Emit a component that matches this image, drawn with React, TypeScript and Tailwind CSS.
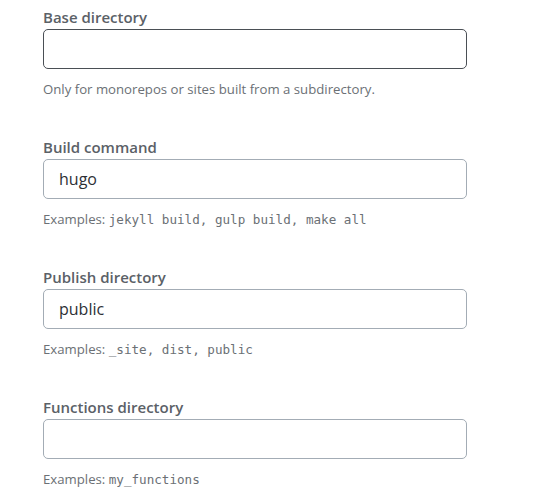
import React from 'react';

type Field = {
  label: string;
  value: string;
  focused?: boolean;
  help: React.ReactNode;
};

const mono = 'font-["DejaVu_Sans_Mono",monospace] text-[12.6px] leading-none';

const fields: Field[] = [
  {
    label: 'Base directory',
    value: '',
    focused: true,
    help: 'Only for monorepos or sites built from a subdirectory.',
  },
  {
    label: 'Build command',
    value: 'hugo',
    help: (
      <>
        Examples: <code className={mono}>jekyll build, gulp build, make all</code>
      </>
    ),
  },
  {
    label: 'Publish directory',
    value: 'public',
    help: (
      <>
        Examples: <code className={mono}>_site, dist, public</code>
      </>
    ),
  },
  {
    label: 'Functions directory',
    value: '',
    help: (
      <>
        Examples: <code className={mono}>my_functions</code>
      </>
    ),
  },
];

const App: React.FC = () => (
  <div className='min-h-screen bg-white pl-[43px] pt-[7px] font-["Open_Sans",sans-serif]'>
    <div className="w-[424px] flex flex-col gap-[39px]">
      {fields.map((f) => (
        <div key={f.label} className="flex flex-col">
          <label className="text-[15px] leading-[20px] font-semibold text-[#5b6167] mb-[2px]">{f.label}</label>
          <div
            className={
              f.focused
                ? 'h-10 w-full rounded-[5px] border border-[#4a4f55] bg-white flex items-center'
                : 'h-10 w-full rounded-[5px] border border-[#a3acb5] bg-white flex items-center'
            }
          >
            <span className="ml-[15px] text-[16px] leading-[20px] font-medium text-[#2d3035]">{f.value}</span>
          </div>
          <p className="mt-[11px] h-[18px] text-[13.2px] leading-[18px] text-[#6b7075]">{f.help}</p>
        </div>
      ))}
    </div>
  </div>
);

export default App;
